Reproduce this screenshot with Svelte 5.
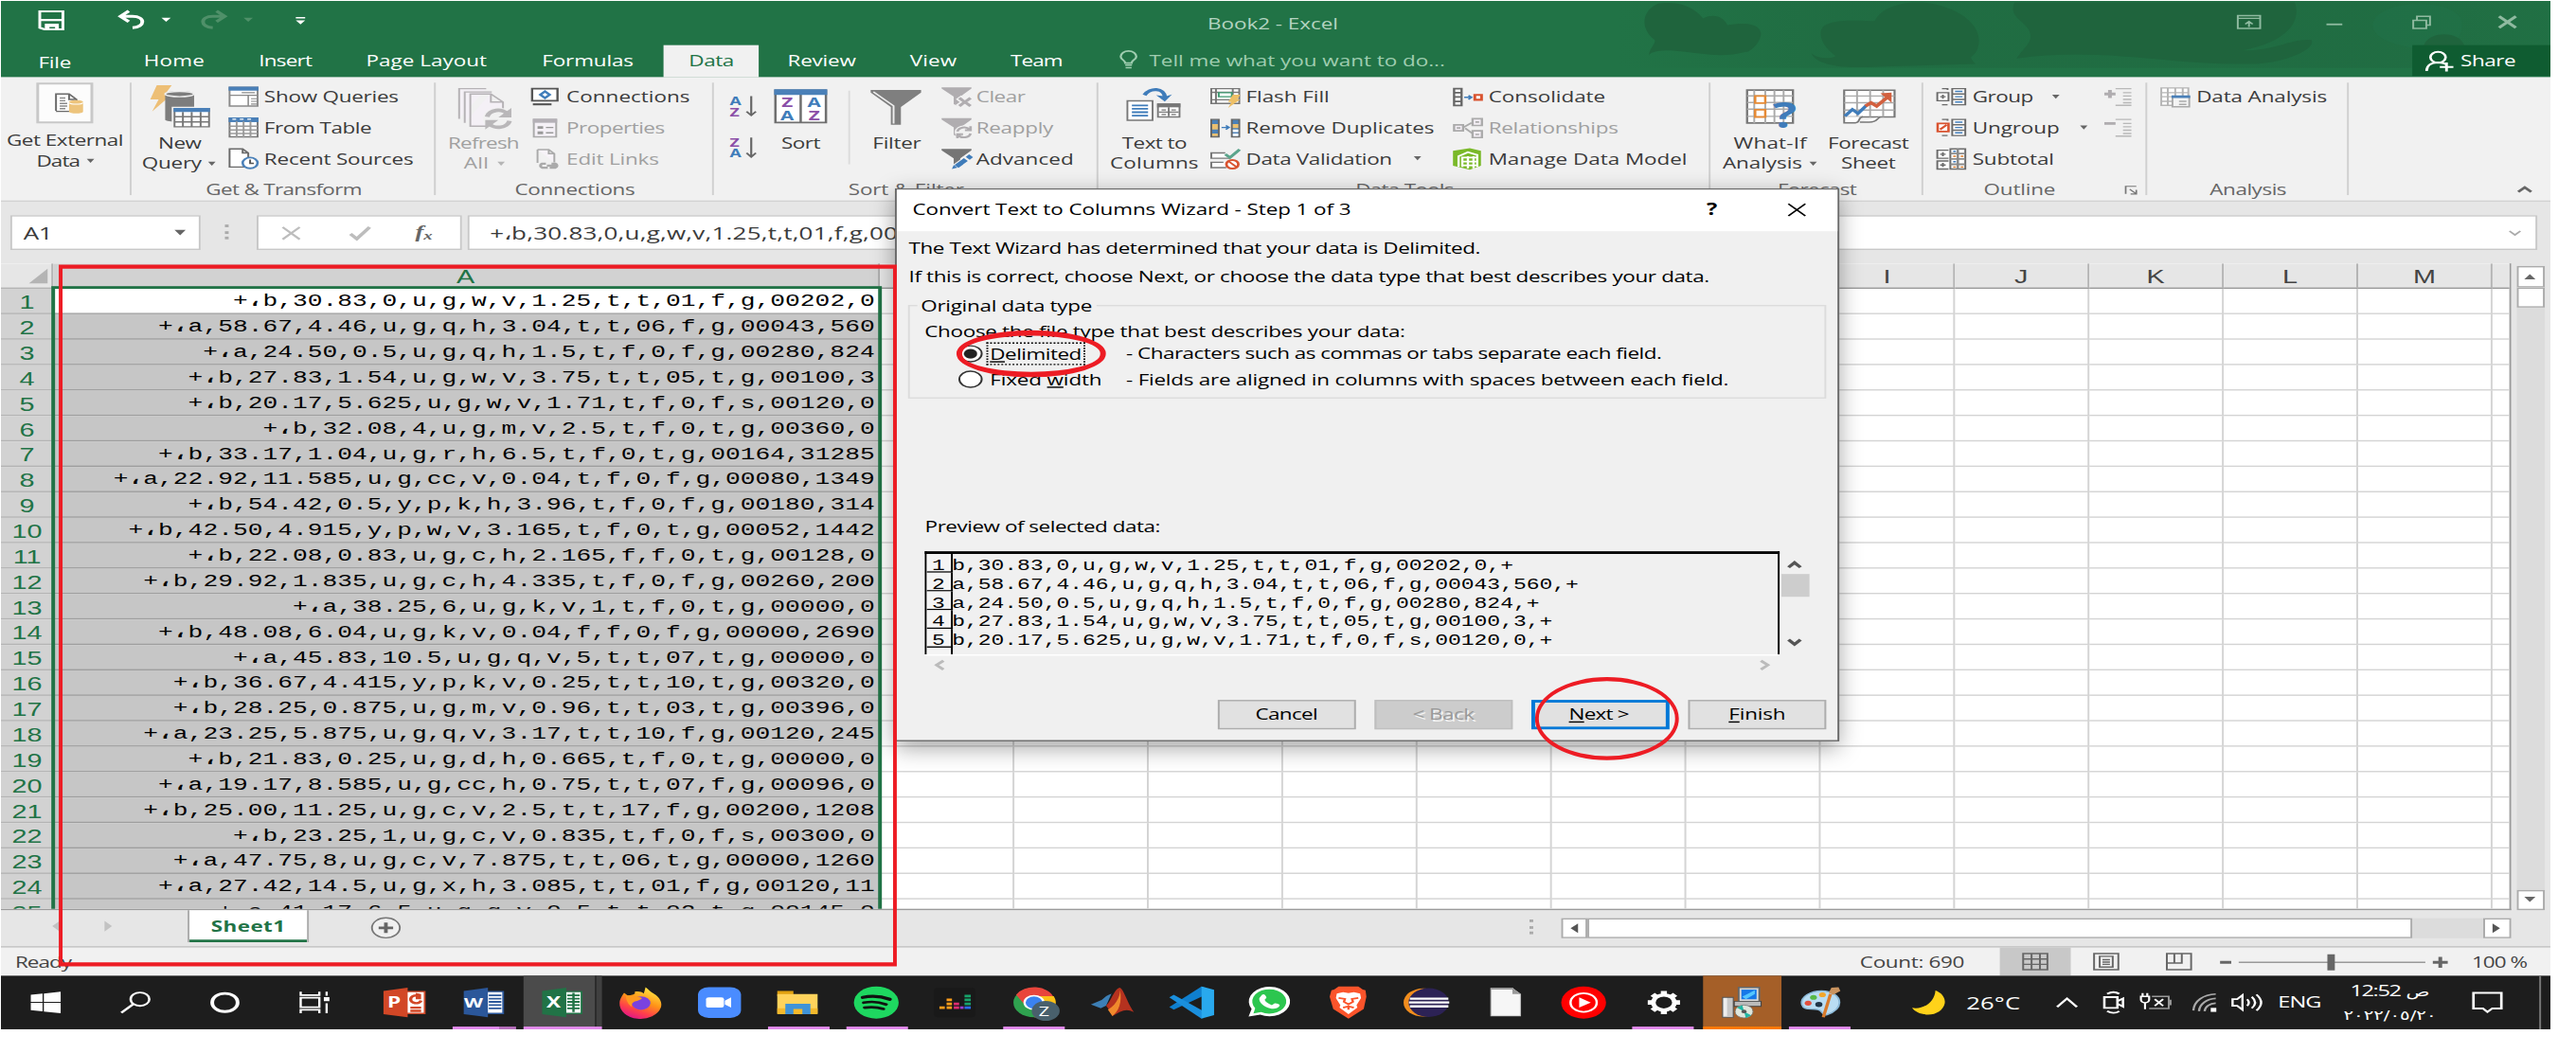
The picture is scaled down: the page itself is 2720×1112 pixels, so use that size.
<script>
  // The desktop is laid out at 1366x768 and stretched to fill the page.
  const SX = 1.9707;

  // Spreads letters so that a run of text takes exactly `w` layout pixels.
  function fit(node, w) {
    if (!w) return;
    const natural = node.getBoundingClientRect().width / SX;
    node.style.letterSpacing = (w - natural) / node.textContent.length + 'px';
  }

  const rows = [
    'b,30.83,0,u,g,w,v,1.25,t,t,01,f,g,00202,0',
    'a,58.67,4.46,u,g,q,h,3.04,t,t,06,f,g,00043,560',
    'a,24.50,0.5,u,g,q,h,1.5,t,f,0,f,g,00280,824',
    'b,27.83,1.54,u,g,w,v,3.75,t,t,05,t,g,00100,3',
    'b,20.17,5.625,u,g,w,v,1.71,t,f,0,f,s,00120,0',
    'b,32.08,4,u,g,m,v,2.5,t,f,0,t,g,00360,0',
    'b,33.17,1.04,u,g,r,h,6.5,t,f,0,t,g,00164,31285',
    'a,22.92,11.585,u,g,cc,v,0.04,t,f,0,f,g,00080,1349',
    'b,54.42,0.5,y,p,k,h,3.96,t,f,0,f,g,00180,314',
    'b,42.50,4.915,y,p,w,v,3.165,t,f,0,t,g,00052,1442',
    'b,22.08,0.83,u,g,c,h,2.165,f,f,0,t,g,00128,0',
    'b,29.92,1.835,u,g,c,h,4.335,t,f,0,f,g,00260,200',
    'a,38.25,6,u,g,k,v,1,t,f,0,t,g,00000,0',
    'b,48.08,6.04,u,g,k,v,0.04,f,f,0,f,g,00000,2690',
    'a,45.83,10.5,u,g,q,v,5,t,t,07,t,g,00000,0',
    'b,36.67,4.415,y,p,k,v,0.25,t,t,10,t,g,00320,0',
    'b,28.25,0.875,u,g,m,v,0.96,t,t,03,t,g,00396,0',
    'a,23.25,5.875,u,g,q,v,3.17,t,t,10,f,g,00120,245',
    'b,21.83,0.25,u,g,d,h,0.665,t,f,0,t,g,00000,0',
    'a,19.17,8.585,u,g,cc,h,0.75,t,t,07,f,g,00096,0',
    'b,25.00,11.25,u,g,c,v,2.5,t,t,17,f,g,00200,1208',
    'b,23.25,1,u,g,c,v,0.835,t,f,0,f,s,00300,0',
    'a,47.75,8,u,g,c,v,7.875,t,t,06,t,g,00000,1260',
    'a,27.42,14.5,u,g,x,h,3.085,t,t,01,f,g,00120,11',
    'a,41.17,6.5,u,g,q,v,0.5,t,t,02,t,g,00145,0'
  ];
  // Headers of the columns that lie behind the dialog stay blank.
  const cols = ['', '', '', '', '', '', '', 'I', 'J', 'K', 'L', 'M'];

  const funnel = (c) => `<path fill="${c}" d="M0 .5H16V1.5L10 7.5V15L6.5 13V7.5L0 1.5Z"/>`;
  const outline = `<path fill="none" stroke="#6a6a6a" d="M6 2.5V1.500H3M6 13.500H3"/><path fill="#fff" stroke="#6a6a6a" d="M8.500 1.500h7v12h-7zM8.500 5.500h7M8.500 9.500h7"/><path stroke="#3f7cba" d="M10 3.500h4M10 7.500h4M10 11.500h4"/>`;
  const pict = {
    showq: '<path fill="#fff" stroke="#8a8a8a" d="M.5 .5h15v14H.5z"/><path fill="#4a80b8" d="M0 0h16v3H0z"/><path stroke="#8a8a8a" d="M.5 6.500h15M10.500 6.500v8M7 4.500h7M12 9h3M12 11h3M12 13h3" stroke-width=".8"/>',
    table: '<path fill="#fff" stroke="#7a7a7a" d="M.5 .5h15v14H.5z"/><path fill="#4a80b8" d="M0 0h16v3.500H0z"/><path stroke="#9a9a9a" d="M.5 6.500h15M.5 9.300h15M.5 12h15M4.300 3v12M8 3v12M11.700 3v12"/><path stroke="#fff" stroke-width=".8" d="M2 1.300h2M6 1.300h2M10 1.300h2"/>',
    recent: '<path fill="#fff" stroke="#6a6a6a" d="M.5 .5h7l3 3v10.500H.5zM7.500.5v3h3"/><circle cx="11.500" cy="11" r="4" fill="#fff" stroke="#4a80b8" stroke-width="1.300"/><path fill="none" stroke="#555" d="M11.500 8.500V11.300H13.500"/>',
    conn: '<path fill="#fff" stroke="#555" stroke-width="1.200" d="M.6 1.500h13.600v9H.6z"/><path stroke="#555" stroke-width="1.500" d="M1 13.200h10"/><path fill="none" stroke="#3f7cba" stroke-width="1.500" d="M7.500 3.500l2.500 2.500-2.500 2.500L5 6z"/>',
    props: '<path fill="#f5f1f7" stroke="#aaa" d="M1.500 1.500h12v13h-12z"/><path fill="#b4b0b6" d="M1 1h13v3H1z"/><path fill="none" stroke="#999" d="M4 7h2v1H4zM4 11h2v1H4zM8 7.500h4M8 11.500h4"/>',
    links: '<path fill="#f7f3f8" stroke="#aaa" d="M3.500 1h6l3 3v6.500M3.500 1v10M9.500 1v3h3"/><path fill="none" stroke="#aaa" stroke-width="1.600" d="M8 11.500H6a1.700 1.700 0 000 3h3M8.500 13h5M11 11.500h2a1.700 1.700 0 010 3h-3"/>',
    clear: funnel('#b0adb0') + '<path stroke="#f1f1f1" stroke-width="4" d="M9 8l7 7M16 8l-7 7"/><path stroke="#b0adb0" stroke-width="1.800" d="M9.500 8.500l6 6M15.500 8.500l-6 6"/>',
    reapply: funnel('#b0adb0') + '<circle cx="12" cy="11" r="5" fill="#f1f1f1"/><path fill="none" stroke="#b0adb0" stroke-width="1.400" d="M8.500 10.500a3.600 3.600 0 016.500-1.500M15.500 12a3.600 3.600 0 01-6.500 1.300M15.500 6.500v3h-3M8.500 15.500v-3h3"/>',
    adv: funnel('#757575') + '<path stroke="#f1f1f1" stroke-width="5" d="M7 15l8-8"/><path stroke="#3f7cba" stroke-width="3" d="M8 13.500l5-5M14 7.500l1.800-1.800"/><path fill="#3f7cba" d="M5.500 15.500l1-3 2 2z"/>',
    flash: '<path fill="#fff" stroke="#777" d="M.5 1.500h15v11H.5zM.5 4.300h15M.5 9.800h15M3 1.500v11M12 1.500v11"/><path fill="#fff" stroke="#3d9970" d="M4.500 4.500h7v3h-7z"/><path fill="#edbf66" d="M12 6h4l-1.500 3.500H16L9.500 16l1.800-4.500H9.500z"/>',
    dups: '<path fill="#4a80b8" stroke="#666" d="M.5 1.500h4v13h-4zM11.500 1.500h4v13h-4z"/><path fill="#eabf70" d="M1 5h3v4H1zM1 12h3v2H1zM12 5h3v3h-3z"/><path fill="#fff" d="M12 9h3v2h-3zM12 12h3v2h-3z"/><path fill="none" stroke="#3f7cba" d="M6 7.500h4M8.300 6l1.700 1.500L8.300 9"/>',
    valid: '<path fill="#fff" stroke="#777" d="M8 3.500H.5v4h10M7 10.500H.5v4h8"/><path fill="none" stroke="#5ba58c" stroke-width="1.800" d="M8 4.500l2.500 2.500L15.700 1"/><circle cx="11.800" cy="12" r="3.200" fill="#fff" stroke="#d9532f" stroke-width="1.400"/><path stroke="#d9532f" stroke-width="1.200" d="M9.700 9.700l4.500 4.500"/>',
    cons: '<path fill="#fff" stroke="#666" stroke-width="1.200" d="M.6 1.500h4v12.500h-4zM.6 4.500h4M.6 7.700h4M.6 11h4"/><path fill="none" stroke="#3f7cba" d="M6 8h4M8.300 6.500L10 8 8.300 9.500"/><path fill="#fff" stroke="#d9532f" stroke-width="1.500" d="M11.700 6.200h3.600v3.600h-3.600z"/>',
    rel: '<path fill="#f4eff6" stroke="#aaa" stroke-width="1.200" d="M.6 5.500h4.800v4.500H.6zM10.500 1h5v5h-5zM10.500 10h5v5h-5z"/><path fill="none" stroke="#aaa" stroke-width="1.200" d="M5.500 7.500L10 4M6.500 8l4 4M2 7.800h2M12 3.500h2M12 12.700h2"/>',
    model: '<path fill="#7ab929" d="M0 2L9 0l6 2v11l-6 3-9-3z"/><path fill="none" stroke="#fff" stroke-width="1.200" d="M3 14V6l5-3 5 2v9M5 14V7h8M5 10h8M8 6v9M11 6v9M5 12.800h8"/>',
    group: outline + '<path fill="#fff" stroke="#6a6a6a" d="M.5 4.500h6v6h-6zM2 7.500h3M3.500 6v3"/>',
    ungroup: outline + '<path fill="#fff" stroke="#d9532f" stroke-width="1.300" d="M.7 4.500h5.800v6H.7zM2 9l3.500-3.500"/>',
    sub: '<path fill="#fff" stroke="#6a6a6a" d="M6.500 1.500h-6v6h6M6.500 9.500h-6v6h6M2 4.500h3M3.500 3v3M2 12.500h3M3.500 11v3M7.500.5h8v15h-8z"/><path stroke="#8a8a8a" stroke-width="1.300" d="M7.500 4h8M7.500 8h8M7.500 12h8M11.500.5v15"/><path stroke="#e07b28" d="M9 6h1.500M13 6h1.500M9 14h1.500M13 14h1.500"/><path stroke="#3f7cba" d="M9 2.300h1.500M9 10h1.500"/>',
    plus: '<path stroke="#b0adb0" stroke-width="2" d="M0 5.500h6M3 2.500v6"/><path stroke="#b8b8b8" d="M6 1.500h8.500M10 4.500h4.500M10 7h4.500M10 9.500h4.500M10 12h4.500M6 14h8.500"/>',
    minus: '<path stroke="#b0adb0" stroke-width="2" d="M0 4.500h6"/><path stroke="#b8b8b8" d="M6 1.500h8.500M10 4.500h4.500M10 7h4.500M10 9.500h4.500M10 12h4.500M6 14h8.500"/>',
    analysis: '<path fill="#fff" stroke="#b5b5b5" d="M.5 1h14.500v13H.5zM.5 4.500h14.500M.5 7.500h8M.5 11h8M4 1v13M8 1v13M12 1v6"/><path fill="#f4f4f4" stroke="#aaa" d="M6.500 7.500h9v7.500h-9z"/><path fill="#4a80b8" d="M6 6.500h10v2H6z"/><path stroke="#aaa" d="M10 11h4M10 13.300h4"/>'
  };
  const big = {
    external: '<path fill="#fcfcfc" stroke="#c8c8c8" stroke-width="1.500" d="M.7.7h29v29h-29z"/><path fill="#fff" stroke="#6a6a6a" d="M10.500 21V8.500h7l4 4v2M17.500 8.500v4h4M10.500 21.500h7"/><path stroke="#8a8a8a" d="M12.500 11.500h3M12.500 13.500h3M12.500 15.500h4M12.500 17.500h4M12.500 19.500h3"/><path fill="#edc47c" d="M17.500 14.500c0-2 7.500-2 7.500 0v7c0 2-7.500 2-7.500 0z"/><path fill="none" stroke="#fff" stroke-width=".8" d="M17.500 15c1 1.500 6.500 1.500 7.500 0"/>',
    query: '<path fill="#edbf76" d="M3.500 0h8L7.500 7.500H11L1 19.500l3.500-9H0z"/><path fill="#7d7d7d" d="M8 6.500c0-3 15.500-3 15.500 0V26c-2 2-13 2-15.500 0z"/><ellipse cx="15.700" cy="6.500" rx="7.700" ry="2" fill="#7d7d7d" stroke="#eee"/><path fill="#fff" stroke="#f1f1f1" stroke-width="3" d="M13 17.500h18.500V31H13z"/><path fill="#fff" stroke="#777" d="M13 17.500h18.500V31H13zM13 23.500h18.500M13 27.300h18.500M17.500 20v11M22.200 20v11M27 20v11"/><path fill="#4a80b8" d="M12.500 17h19.500v3H12.500z"/>',
    refresh: '<path fill="#f4f0f6" stroke="#b5b2b5" d="M15 .5H.5V23M18 3H3.500v23M6.500 28.500V4.500h11l6.500 6v18zM17.500 4.500v6h6.500"/><circle cx="21.500" cy="23" r="8.300" fill="#f1f1f1"/><path fill="none" stroke="#b9b7b9" stroke-width="2.600" d="M15.500 21.500a6 6 0 0111-2M27.500 24.500a6 6 0 01-11 2"/><path fill="#b9b7b9" d="M28.500 15v7h-7zM14.500 31v-7h7z"/>',
    sort: '<path fill="#fff" stroke="#6f6f6f" stroke-width="1.300" d="M.7.7h27.600v24.600H.7zM14.500 4v21"/><path fill="#4a80b8" d="M0 0h29v4.300H0z"/>',
    filter: '<path fill="#7f7f7f" d="M0 .5h27.500V2.500L16.500 13.500V27H11V13.500L0 2.500z"/><path fill="none" stroke="#eee" stroke-width="1" d="M1.500 2l11 10.500V26"/>',
    t2c: '<path fill="#fff" stroke="#777" d="M.5 10h14v15H.5zM17.500 12.500h12v10h-12z"/><path stroke="#3f7cba" stroke-width="1.300" d="M3 13.500h9M3 16.200h9M3 18.800h9M3 21.500h9"/><path fill="#777" d="M17 12h13v3H17z"/><path stroke="#777" d="M18 18.700h11M23.500 15v7M19.500 17h2.500M25 17h2.500M19.500 20.500h2.500M25 20.500h2.500"/><path fill="none" stroke="#3f7cba" stroke-width="2.400" d="M10 5.500C13-.5 21-.5 21.500 7.500"/><path fill="#3f7cba" d="M16.500 5.500l4.800 5 4-5.500-3.500 1.500z"/>',
    whatif: '<path fill="#fff" stroke="#777" stroke-width="1.200" d="M.6.6h25v25H.6z"/><path stroke="#aaa" d="M.6 5h25M.6 10h25M.6 15h25M.6 20.500h25M4.500.6v25M10.500.6v25M15.500.6v25M20.500.6v25"/><path fill="#fff" stroke="#e58a35" stroke-width="1.300" d="M5 5h5.500v5.500H5zM5 15.500h5.500V21H5z"/>',
    forecast: '<path fill="#fff" stroke="#777" stroke-width="1.100" d="M.6.6h27v20h-27z"/><path stroke="#aaa" d="M.6 5h27M.6 10h27M.6 15.500h27M7.500.6v20M14.500.6v20M21.500.6v20"/><path fill="#fff" stroke="#777" d="M.6 20.500v4.500h6c3 0 1-4 4-4.500M9 24.500h5c4.500 0 4-3 6-4"/><path fill="none" stroke="#3f7cba" stroke-width="2" d="M1 20l4-5 3 3 4.500-6"/><path fill="none" stroke="#d2603f" stroke-width="2.200" d="M12 12.500l3-2.500 3 2.500 7-8"/><path fill="#d2603f" d="M20 3l6-.5V10z"/>'
  };
  const apps = [
    ['ppt', '<path fill="#fff" stroke="#d24726" d="M12 4h12v17H12z"/><path fill="#d24726" d="M1 3.500L14.500 1v23L1 21.500z"/><path fill="none" stroke="#d24726" stroke-width="1.800" d="M16 16.500h6M16 19h6M19 7a3 3 0 103 4"/><path fill="#d24726" d="M19 5l3 1v4h-3z"/>', 'P'],
    ['word two', '<path fill="#fff" stroke="#2b579a" d="M12 4h11v17H12z"/><path stroke="#2b579a" d="M15 7h7M15 9.500h7M15 12h7M15 14.500h7M15 17h7" stroke-width="1.300"/><path fill="#2b579a" d="M1 3.500L14.500 1v23L1 21.500z"/>', 'W'],
    ['excel active', '<path fill="#fff" stroke="#217346" d="M12 4h11v17H12z"/><path stroke="#217346" stroke-width="1.300" d="M15 7h7M15 9.500h7M15 12h7M15 14.500h7M15 17h7M18.500 5v15"/><path fill="#217346" d="M1 3.500L14.500 1v23L1 21.500z"/>', 'X'],
    ['firefox', '<defs><linearGradient id="ff" x1=".8" y1="0" x2=".3" y2="1"><stop offset="0" stop-color="#fff14a"/><stop offset=".45" stop-color="#ff9416"/><stop offset=".75" stop-color="#ff3f4b"/><stop offset="1" stop-color="#e0158a"/></linearGradient></defs><path fill="url(#ff)" d="M15 .5c2 2 2.500 3.500 4.500 5 3.500 3 5 7 4 11A11.700 11.700 0 01.5 13C.5 10 2 7 3 5l2 2c1 0 3-.5 4-1.500L9 4c2-.5 4 0 5 1.500z"/><circle cx="12.500" cy="13" r="5.200" fill="#7a42e0"/><path fill="#ff9a1f" d="M4 7c3 0 5 0 9 2-1 2-3 2-4.500 3-2 2-1 3-1 4C5 14 4 10 4 7z"/>'],
    ['camera', '<rect x=".5" y=".5" width="24" height="24" rx="6" fill="#4a8cff"/><rect x="5" y="8.500" width="10" height="8" rx="1.500" fill="#fff"/><path fill="#fff" d="M15.500 11l3.500-2.500v8L15.500 14z"/>'],
    ['folder open', '<path fill="#e0a110" d="M1 3.500h9v4H1z"/><path fill="#ffd35c" d="M1 6h22.500v15H1z"/><path fill="#f4b92c" d="M1 17h22.500v4.500H1z"/><path fill="#3f93d8" d="M5.500 13.500h14V21.500h-4.500v-4h-5v4H5.500z"/>'],
    ['spotify open', '<circle cx="12.500" cy="12.500" r="12.500" fill="#1ed760"/><path fill="none" stroke="#111" stroke-width="2.400" stroke-linecap="round" d="M5 8.500c5-1.500 10-1 15 1.500"/><path fill="none" stroke="#111" stroke-width="2" stroke-linecap="round" d="M5.500 12.600c4-1 8.500-.7 12.500 1.400M6 16.500c4-.8 7-.5 10.500 1"/>'],
    ['deezer', '<rect x="1" y="1" width="23" height="23" rx="2" fill="#191919"/><path fill="#ff9d1b" d="M4 15.500h3v2H4zM8 15.500h3v2H8zM8 12.500h3v2H8zM8 9.500h3v2H8z"/><path fill="#e02c72" d="M12 15.500h3v2h-3zM12 12.500h3v2h-3z"/><path fill="#9b3cd0" d="M15.500 15.500h2v2h-2z"/><path fill="#2c6bf0" d="M18 15.500h3.500v2H18z"/><path fill="#17a36b" d="M18 6.500h3.500v2H18zM18 9.500h3.500v2H18zM18 12.500h3.500v2H18z"/>'],
    ['chrome open', '<circle cx="12" cy="12.500" r="11.500" fill="#2fa24f"/><path fill="#e8453c" d="M2 6.500A11.500 11.500 0 0123 8.500H12l-5 6z"/><path fill="#fbc116" d="M12 7.500h11a11.500 11.500 0 01-11 16.500L17 14z"/><circle cx="12" cy="12.500" r="5.300" fill="#3b82f0" stroke="#fff" stroke-width="1.200"/><circle cx="18.500" cy="19" r="7.800" fill="#49606c"/>', 'Z'],
    ['matlab', '<path fill="#3d7fb5" d="M0 14l6-3.500 2.500-3c1.500-1 2.500-1.500 3-2L8.500 15l-3 2z"/><path fill="#b5321f" d="M8.500 15C11.500 11 13 2 16 1c2 0 4 11 8 19-3-2-5-2-8 0l-4 3c-1-3-2-5-3.500-8z"/><path fill="#f08a2c" d="M16 1c1 4-1 13-6.500 17l2.500 5c3-3 6-10 4-22z"/>'],
    ['code', '<path fill="#0f7fce" d="M18 0L0 16l2.500 2L24 4z"/><path fill="#1a8fdd" d="M0 8.500l2.500-2L20 20l-2 5z"/><path fill="#29a9ee" d="M18 0l7 2.700v19.600L18 25z"/>'],
    ['whatsapp', '<path fill="#fff" d="M.5 23.500L2.200 17.500A11.500 11.500 0 117 22z"/><path fill="#2cc64f" d="M3.200 21l1-4A9.500 9.500 0 117.500 20z"/><path fill="#fff" d="M8 6.500c1-1 2 0 2.500 2 0 1-1 1.300-1 2 .7 1.800 2 3 4 4 1-.3 1-1.400 2-1.300 2 .6 2.700 1.200 2.300 2-.8 2-3 2.500-5 2C9 16 6 12 6.500 9z"/>'],
    ['brave', '<path fill="#fb542b" d="M7 0h11l2.500 2.500 1.500.5.500 5-1.500 9.500-8.500 7.500-8.500-7.500L2 8l1-5 1.500-.5z"/><path fill="#fff" d="M6 5.500l3.500-1 3 .7 3-.7 3.500 1 .5 3.500-2.500 5.500.5 2-5 5-5-5 .5-2L5.500 9z"/><path fill="none" stroke="#fb542b" stroke-width="1.300" d="M7 9l3.500.7-.5 2.300 2.500 2 2.500-2-.5-2.300 3.500-.7M9.500 16.500l3-1 3 1M12.500 15v3"/>'],
    ['eclipse', '<circle cx="10.500" cy="12.500" r="11" fill="#f18d1d"/><circle cx="13.500" cy="12.500" r="11.200" fill="#2c2255"/><path stroke="#fff" stroke-width="1.700" d="M3 9.500h21.500M2.500 12.500H25M3 15.500h21.500"/>'],
    ['blank', '<path fill="#f6f6f6" stroke="#bbb" stroke-width=".6" d="M4.500 1.500h12l4.500 4.500v17H4.500z"/><path fill="#999" d="M4.500 1H17v1.500H4.500zM16.500 1.500L21 6h-4.500z"/>'],
    ['ytm', '<circle cx="12.500" cy="12.500" r="12.500" fill="#f00"/><circle cx="12.500" cy="12.500" r="7.300" fill="none" stroke="#fff" stroke-width="1.300"/><path fill="#fff" d="M10 8.500l6.500 4-6.500 4z"/>'],
    ['cog open', '<circle cx="12.500" cy="12.500" r="5.900" fill="none" stroke="#fff" stroke-width="2.600"/><path stroke="#fff" stroke-width="3.400" d="M12.500 3.500v3.500M12.500 18v3.500M3.500 12.500H7M18 12.500h3.500M6.200 6.200l2.300 2.300M18.800 6.200l-2.300 2.300M6.200 18.800l2.300-2.300M18.800 18.800l-2.300-2.300"/>'],
    ['setup', '<path fill="#c8c8c8" stroke="#555" stroke-width=".6" d="M1.500 8.500h6V24h-6z"/><path fill="#eee" d="M2 9h2v14H2z"/><path fill="#d8d8d8" stroke="#666" d="M10.500.8H22V12H10.500z"/><path fill="#1678e8" d="M12 2.500h8.500v7.500H12z"/><path fill="#54c6ff" d="M12.500 8l7-5v3l-5 4z"/><path fill="#bbb" stroke="#444" stroke-width=".6" d="M8 11.500h15v4H8z"/><circle cx="13.500" cy="19.500" r="5" fill="#dfe6dc" stroke="#777" stroke-width=".5"/><path fill="#21b6a3" d="M13.500 19.500l-4-3 3-2zM13.500 19.500l4 3-3 2z"/><circle cx="13.500" cy="19.500" r="1.400" fill="#555"/>'],
    ['paint open', '<path fill="#b9ddf3" stroke="#8bb9d8" d="M2 14C1 8 7 3.500 13 3.500s10 4 10 9-4 8-7 9.500c-3 1-2-3-5-4-4-1-8 1-9-4z"/><circle cx="5.500" cy="13" r="1.900" fill="#e2503e"/><circle cx="8.500" cy="8.500" r="1.900" fill="#57b947"/><circle cx="13.500" cy="6.500" r="1.900" fill="#f1a62c"/><circle cx="11.500" cy="14" r="2" fill="#1f3549"/><path stroke="#d97b2c" stroke-width="1.800" d="M18 6l-4 18"/><path fill="#c9935f" d="M17 5l1.500-4 4-.5 1 3-4 3z"/>']
  ];
</script>

{#snippet t(text, w, cls = '')}<span class="t {cls}" use:fit={w}>{text}</span>{/snippet}
{#snippet caret(cls = '')}<i class="caret {cls}"></i>{/snippet}
{#snippet cmd(icon, text, w, cls = '')}
  <div class="cmd {cls}"><svg class="sm" viewBox="0 0 16 16">{@html pict[icon]}</svg>{@render t(text, w)}{#if cls.includes('menu')}{@render caret()}{/if}</div>
{/snippet}
{#snippet label(text, w)}<div class="glabel">{@render t(text, w)}</div>{/snippet}

<div class="page">
  <div class="screen">
    <header class="titlebar">
      <svg class="art" viewBox="0 0 500 57">
        <defs><linearGradient id="haze" x1="0" x2="1"><stop offset="0" stop-color="#1f653e" stop-opacity="0"/><stop offset=".25" stop-color="#1f653e" stop-opacity=".45"/><stop offset=".8" stop-color="#1f653e" stop-opacity=".45"/><stop offset="1" stop-color="#1f653e" stop-opacity=".25"/></linearGradient></defs>
        <path fill="url(#haze)" d="M0 0h500v50H0z"/>
        <path fill="#1f643d" d="M22 2c10-2 19 2 24 11 6-4 11-1 13 5 8-2 17-2 18 6 0 8-7 15-8 14-16 6-29-1-43-1-5 0-9 2-9 4 0-6 4-9 3-12C13 22 12 8 22 2z"/>
        <path fill="#1f643d" d="M109 24c0-12 20-9 29-9 4-12 20-17 34-12 14 5 25 18 21 33-2 7-6 4-1 11l-50 2c-12 1-34 2-38-10 4 5 12 4 13 2-5-5-8-11-8-17z"/>
        <path fill="#1f643d" d="M213 1h150c4 15-5 30-28 36 19 0 25-9 37-8 3 8-18 19-35 18-40 1-79-13-123-4 4-9 9-12 7-20-2-8-12-11-8-22z"/>
        <path fill="#22724a" opacity=".6" d="M405 16c4-17 40-19 47-3 3 13-5 23-14 24-20-2-35-9-33-21z"/>
        <path fill="#1f643d" d="M432 34c2-12 20-12 22 0z"/>
      </svg>
      <div class="quick">
        <svg viewBox="0 0 150 16">
          <path fill="none" stroke="#fff" stroke-width="1.500" d="M.8.8h12.400v13.400H3.300L.8 13z"/><path fill="#fff" d="M.8 6.500h12.400V8H.8zM3.500 10h7.500v5H9v-2.500H6V15H3.500z"/>
          <path fill="none" stroke="#fff" stroke-width="2" d="M44 4.500h6.500c7 0 7 8 0 8.500M48.500.5L44 4.500l4.500 4"/>
          <path fill="#fff" d="M66 5.500h5L68.500 8.500z"/>
          <path fill="none" stroke="#4f9069" stroke-width="2" d="M100 4.500h-6.500c-7 0-7 8 0 8.500M95.500.5L100 4.500l-4.500 4"/>
          <path fill="#4f9069" d="M110 5.500h5L112.500 8.500z"/>
          <path fill="#fff" d="M138 5h5v1h-5zM138 7.500h5L140.500 10.500z"/>
        </svg>
      </div>
      <div class="docname">{@render t('Book2 - Excel', 70)}</div>
      <div class="winctl">
        <svg viewBox="0 0 152 12">
          <g fill="none" stroke="#8fbaa0"><path d="M.5 1h12v9.500H.5zM.5 3h12M6.500 9.500V5.500M4.500 7.300l2-2 2 2"/><path stroke-width="1.300" d="M48 7.500h8.500"/><path d="M94.500 4.500h7v6h-7zM96.500 4.500v-3h7v6.500h-2"/><path stroke-width="1.800" d="M140.500 1.500l9 8.500M149.500 1.500l-9 8.500"/></g>
        </svg>
      </div>
      <nav>
        <span class="tab file">{@render t('File', 17.700)}</span>
        <span class="tab home">{@render t('Home', 32.600)}</span>
        <span class="tab insert">{@render t('Insert', 28.500)}</span>
        <span class="tab layout">{@render t('Page Layout', 64.800)}</span>
        <span class="tab formulas">{@render t('Formulas', 49)}</span>
        <span class="tab data">{@render t('Data', 24)}</span>
        <span class="tab review">{@render t('Review', 36.500)}</span>
        <span class="tab view">{@render t('View', 25.200)}</span>
        <span class="tab team">{@render t('Team', 27.600)}</span>
        <span class="tab tell"><svg viewBox="0 0 11 14"><path fill="none" stroke="#9fcdb0" stroke-width="1.200" d="M3.500 9.500C3.500 7 1 7 1 4.500a4.300 4.300 0 018.600 0C9.600 7 7 7 7 9.500zM3.500 11h3.700M3.700 13h3.300"/></svg>{@render t('Tell me what you want to do...', 158.500)}</span>
        <span class="share"><svg viewBox="0 0 16 16"><path fill="none" stroke="#fff" stroke-width="1.400" d="M.7 15.500c0-5 3-6.500 6.300-6.500s4 1 4.500 1.500"/><circle cx="7" cy="5" r="4.200" fill="none" stroke="#fff" stroke-width="1.400"/><path stroke="#fff" stroke-width="1.500" d="M8 12.500h7.500M11.700 9v7"/></svg>{@render t('Share', 29.500)}</span>
      </nav>
    </header>

    <section class="ribbon">
      <div class="group g1">
        <div class="big"><svg viewBox="0 0 31 31" class="b1">{@html big.external}</svg>{@render t('Get External', 62.500)}<span>{@render t('Data', 23.200)}{@render caret()}</span></div>
      </div>
      <div class="group g2">
        <div class="body">
          <div class="big"><svg viewBox="0 0 32 32" class="b2">{@html big.query}</svg>{@render t('New', 23)}<span class="wm">{@render t('Query', 32)}{@render caret()}</span></div>
          <div class="list">{@render cmd('showq', 'Show Queries', 72)}{@render cmd('table', 'From Table', 57.500)}{@render cmd('recent', 'Recent Sources', 80)}</div>
        </div>
        {@render label('Get & Transform', 83.500)}
      </div>
      <div class="group g3">
        <div class="body">
          <div class="big off"><svg viewBox="0 0 31 32" class="b3">{@html big.refresh}</svg>{@render t('Refresh', 38)}<span>{@render t('All', 13.500)}{@render caret()}</span></div>
          <div class="list">{@render cmd('conn', 'Connections', 66.200)}{@render cmd('props', 'Properties', 52.500, 'off')}{@render cmd('links', 'Edit Links', 49.500, 'off')}</div>
        </div>
        {@render label('Connections', 64.500)}
      </div>
      <div class="group g4">
        <div class="body">
          <div class="az">
            <div class="pair"><b><i class="blue">A</i><i class="purple">Z</i></b><svg viewBox="0 0 6 16"><path fill="none" stroke="#666" stroke-width="1.100" d="M3 0v14M.5 11.500L3 14.500l2.500-3"/></svg></div>
            <div class="pair"><b><i class="purple">Z</i><i class="blue">A</i></b><svg viewBox="0 0 6 16"><path fill="none" stroke="#666" stroke-width="1.100" d="M3 0v14M.5 11.500L3 14.500l2.500-3"/></svg></div>
          </div>
          <div class="big sortbtn"><span class="sorticon"><svg viewBox="0 0 29 26" class="b4">{@html big.sort}</svg><b class="zaaz"><i class="purple">Z</i><i class="blue">A</i><i class="blue">A</i><i class="purple">Z</i></b></span>{@render t('Sort', 20.700)}</div>
          <div class="rule"></div>
          <div class="big filterbtn"><svg viewBox="0 0 28 28" class="b5">{@html big.filter}</svg>{@render t('Filter', 26)}</div>
          <div class="list">{@render cmd('clear', 'Clear', 26.300, 'off')}{@render cmd('reapply', 'Reapply', 41.300, 'off')}{@render cmd('adv', 'Advanced', 52.300)}</div>
        </div>
        {@render label('Sort & Filter', 62)}
      </div>
      <div class="group g5">
        <div class="body">
          <div class="big"><svg viewBox="0 0 31 27" class="b6">{@html big.t2c}</svg>{@render t('Text to', 34.600)}{@render t('Columns', 47.600)}</div>
          <div class="list l1">{@render cmd('flash', 'Flash Fill', 44.800)}{@render cmd('dups', 'Remove Duplicates', 101)}{@render cmd('valid', 'Data Validation', 78.300, 'menu')}</div>
          <div class="list">{@render cmd('cons', 'Consolidate', 62.700)}{@render cmd('rel', 'Relationships', 69.500, 'off')}{@render cmd('model', 'Manage Data Model', 106.500)}</div>
        </div>
        {@render label('Data Tools', 52.600)}
      </div>
      <div class="group g6">
        <div class="body">
          <div class="big wi"><span class="wf"><svg viewBox="0 0 29 30" class="b7">{@html big.whatif}</svg><b>?</b></span>{@render t('What-If', 39.200)}<span>{@render t('Analysis', 42.600)}{@render caret()}</span></div>
          <div class="big fc"><svg viewBox="0 0 28 26" class="b8">{@html big.forecast}</svg>{@render t('Forecast', 43.300)}{@render t('Sheet', 29)}</div>
        </div>
        {@render label('Forecast', 42.200)}
      </div>
      <div class="group g7">
        <div class="body">
          <div class="list l1">{@render cmd('group', 'Group', 32.500, 'menu')}{@render cmd('ungroup', 'Ungroup', 46.700, 'menu')}{@render cmd('sub', 'Subtotal', 43.700)}</div>
          <div class="list">{@render cmd('plus', '', 0)}{@render cmd('minus', '', 0)}</div>
        </div>
        <div class="glabel out">{@render t('Outline', 38.500)}<svg viewBox="0 0 8 8"><path fill="none" stroke="#777" d="M.5 7V.5H7M3 3l3.500 3.500M7 3.500V7H3.500"/></svg></div>
      </div>
      <div class="group g8">
        <div class="body"><div class="list">{@render cmd('analysis', 'Data Analysis', 70)}</div></div>
        {@render label('Analysis', 41)}
      </div>
      <svg class="collapse" viewBox="0 0 9 6"><path fill="none" stroke="#666" stroke-width="1.800" d="M.7 5L4.500 1.300 8.300 5"/></svg>
    </section>

    <section class="fbar">
      <div class="box name">{@render t('A1', 15.500)}{@render caret('lg')}</div>
      <div class="dots"><i></i><i></i><i></i></div>
      <div class="box tools">
        <svg viewBox="0 0 12 12"><path stroke="#bdbdbd" stroke-width="1.500" d="M1 1l10 10M11 1L1 11"/></svg>
        <svg viewBox="0 0 13 12"><path fill="none" stroke="#bdbdbd" stroke-width="2.300" d="M.8 6.500l3.700 4L12 1"/></svg>
        <em>f<sub>x</sub></em>
      </div>
      <div class="box formula">{@render t('+،b,30.83,0,u,g,w,v,1.25,t,t,01,f,g,00202,0', 253)}<svg viewBox="0 0 9 6"><path fill="none" stroke="#aaa" stroke-width="1.300" d="M1 1l3.500 3.500L8 1"/></svg></div>
    </section>

    <section class="work">
      <div class="sheet">
        <div class="row head">
          <div class="num"><svg viewBox="0 0 10 11"><path fill="#b4b4b4" d="M10 0v11H0z"/></svg></div>
          <div class="a">A</div>
          {#each cols as c}<div class="c">{c}</div>{/each}
          <div class="c tail"></div>
        </div>
        {#each rows as r, i}
          <div class="row" class:first={i === 0}>
            <div class="num">{i + 1}</div>
            <div class="a"><span>+<u>،</u>{r}</span></div>
            {#each cols as c}<div class="c"></div>{/each}
            <div class="c tail"></div>
          </div>
        {/each}
        <div class="selection"></div>
      </div>
      <div class="vscroll"><div class="btn">{@render caret('up')}</div><div class="thumb"></div><div class="btn end">{@render caret('lg')}</div></div>
    </section>

    <section class="tabs">
      <svg class="navs" viewBox="0 0 32 8"><path fill="#c2c2c2" d="M4.500 0v8L.5 4zM28.500 0v8l4-4z"/></svg>
      <div class="sheettab">{@render t('Sheet1', 40)}</div>
      <svg class="add" viewBox="0 0 17 17"><circle cx="8.500" cy="8.500" r="7.700" fill="#f0f0f0" stroke="#777"/><path stroke="#666" stroke-width="2" d="M4.500 8.500h8M8.500 4.500v8"/></svg>
      <div class="dots"><i></i><i></i><i></i></div>
      <div class="hscroll"><div class="btn"><svg viewBox="0 0 4 7"><path fill="#555" d="M4 0v7L0 3.500z"/></svg></div><div class="thumb"></div><div class="btn end"><svg viewBox="0 0 4 7"><path fill="#555" d="M0 0v7l4-3.500z"/></svg></div></div>
    </section>

    <footer class="status">
      <div class="ready">{@render t('Ready', 30)}</div>
      <div class="count">{@render t('Count: 690', 56)}</div>
      <div class="v on"><svg viewBox="0 0 14 13"><path fill="none" stroke="#666" d="M.5.500h13v12H.5zM.5 4.500h13M.5 8.500h13M5 .5v12M9.500.5v12"/></svg></div>
      <div class="v"><svg viewBox="0 0 14 13"><path fill="none" stroke="#666" d="M.5.500h13v12H.5zM3.500 2.500h7v8h-7zM5 5h4M5 6.800h4M5 8.500h4"/></svg></div>
      <div class="v"><svg viewBox="0 0 14 13"><path fill="none" stroke="#666" d="M.5.500h13v12H.5zM.5 7.500h8v-7M4.500.5v7"/></svg></div>
      <svg class="slider" viewBox="0 0 122 12"><path stroke="#999" d="M10 6h100"/><path stroke="#666" stroke-width="2" d="M0 6h6M114 6h8M118 2v8"/><path fill="#666" d="M57.500 0h4v12h-4z"/></svg>
      {@render t('100 %', 29.500)}
    </footer>

    <section class="taskbar">
      <div class="sys"><svg viewBox="0 0 16 16"><path fill="#fff" d="M0 2.300L6.300 1.400V7.500H0zM7 1.300L16 0v7.500H7zM0 8.300h6.300v6.300L0 13.700zM7 8.300h9V16l-9-1.300z"/></svg></div>
      <div class="sys"><svg viewBox="0 0 16 16"><circle cx="10.500" cy="5.500" r="5" fill="none" stroke="#fff" stroke-width="1.300"/><path stroke="#fff" stroke-width="1.500" d="M7 9.200L.5 15.700"/></svg></div>
      <div class="sys"><svg viewBox="0 0 16 16"><circle cx="8" cy="8" r="6.800" fill="none" stroke="#fff" stroke-width="2"/></svg></div>
      <div class="sys tv"><svg viewBox="0 0 16 16"><path fill="none" stroke="#fff" stroke-width="1.200" d="M.6 0v2.500h10V0M.6 16v-2.500h10V16M.6 4.500h10v7H.6zM14.500 0v3M14.500 8.500V16"/><path fill="#fff" d="M13 4h3v3h-3z"/></svg></div>
      <div class="apps">
        {#each apps as [cls, svg, letter]}
          <div class="app {cls}"><div class="glyph"><svg viewBox="0 0 25 25">{@html svg}</svg>{#if letter}<b>{letter}</b>{/if}</div></div>
        {/each}
      </div>
      <svg class="moon" viewBox="0 0 18 18"><path fill="#ffd21a" d="M12.500 0c3 1.500 5.500 5 5 9.500-.7 5-4.500 8.500-9 8.500C4.500 18 1.500 16 0 13c5.500 1.500 12-3.500 12.500-13z"/></svg>
      <span class="temp">{@render t('26°C', 29)}</span>
      <svg class="chev" viewBox="0 0 12 8"><path fill="none" stroke="#fff" stroke-width="1.400" d="M.7 7.300L6 1l5.300 6.300"/></svg>
      <svg class="meet" viewBox="0 0 12 18"><path fill="none" stroke="#fff" stroke-width="1.300" d="M1 5h7v8H1zM8 8l3-2v6l-3-2M2.500 2.500Q6 0 9 2.500M2.500 15.500Q6 18 9 15.500"/></svg>
      <svg class="batt" viewBox="0 0 17 14"><path fill="none" stroke="#999" d="M6.500 2.500h9v9H5M16.500 5v4"/><path fill="none" stroke="#fff" stroke-width="1.100" d="M1.500 0v2.500M4 0v2.500M.6 2.500h4.400v2.500a2.200 2.200 0 01-4.400 0zM2.800 7.500V12M8 4.500l4.500 5M12.500 4.500L8 9.500"/></svg>
      <svg class="wifi" viewBox="0 0 13 14"><path fill="none" stroke="#aaa" stroke-width="1.200" d="M.7 13C1 6 6 1 12.700.7M3.700 13.500C4 8 8 4.300 12.700 4M6.700 13.500C7 10 9.500 7.700 12.700 7.500"/><path fill="#fff" d="M10 11h3v3h-3z"/></svg>
      <svg class="vol" viewBox="0 0 17 14"><path fill="none" stroke="#fff" stroke-width="1.200" d="M.7 4.500h2.500L6 1.500v11L3.200 9.500H.7zM8.500 4.500q1.800 2.500 0 5M11 2.700q3.500 4.300 0 8.600M13.500 1q5 6 0 12"/></svg>
      <span class="eng">{@render t('ENG', 23)}</span>
      <div class="clock"><div>{@render t('12:52', 27)}<span class="ar">ص</span></div><div class="ar">٢٠٢٢/٠٥/٢٠</div></div>
      <svg class="note" viewBox="0 0 17 17"><path fill="none" stroke="#fff" stroke-width="1.400" d="M.8.8h15.400v12h-5L8.500 15.500 6 12.800H.8z"/></svg>
      <i class="peek"></i>
    </section>

    <div class="dialog">
      <div class="dtitle">{@render t('Convert Text to Columns Wizard - Step 1 of 3', 235)}<b>?</b><svg viewBox="0 0 11 11"><path stroke="#000" stroke-width="1.100" d="M.5.5l10 10M10.500.5l-10 10"/></svg></div>
      <div class="dbody">
        <p>{@render t('The Text Wizard has determined that your data is Delimited.', 306.300)}</p>
        <p>{@render t('If this is correct, choose Next, or choose the data type that best describes your data.', 429)}</p>
        <div class="frame">
          <div class="legend">{@render t('Original data type', 91.700)}</div>
          <div class="choose">{@render t('Choose the file type that best describes your data:', 257.500)}</div>
          <div class="opt"><i class="radio on"></i><span class="focus"><span class="t" use:fit={49}><u>D</u>elimited</span></span>{@render t('- Characters such as commas or tabs separate each field.', 286.800)}</div>
          <div class="opt"><i class="radio"></i><span class="plain"><span class="t" use:fit={60}>Fixed <u>w</u>idth</span></span>{@render t('- Fields are aligned in columns with spaces between each field.', 322.800)}</div>
        </div>
        <div class="plabel">{@render t('Preview of selected data:', 126)}</div>
        <div class="preview">
          <div class="lines">
            {#each rows.slice(0, 5) as r, i}<div class="pl"><b>{i + 1}</b><span>{r},+</span></div>{/each}
            <div class="pl"><b></b></div>
          </div>
          <div class="pscroll"><svg viewBox="0 0 8 6"><path fill="none" stroke="#555" stroke-width="2" d="M.8 5L4 1.500 7.200 5"/></svg><div></div><svg class="dn" viewBox="0 0 8 6"><path fill="none" stroke="#555" stroke-width="2" d="M.8 1L4 4.500 7.200 1"/></svg></div>
        </div>
        <div class="pfoot"><svg viewBox="0 0 6 8"><path fill="none" stroke="#bbb" stroke-width="1.800" d="M5 .7L1.300 4 5 7.300"/></svg><svg viewBox="0 0 6 8"><path fill="none" stroke="#bbb" stroke-width="1.800" d="M1 .7L4.700 4 1 7.300"/></svg></div>
        <div class="btns">
          <div class="bt">{@render t('Cancel', 33.300)}</div>
          <div class="bt dis">{@render t('< Back', 33)}</div>
          <div class="bt def"><span class="t" use:fit={32}><u>N</u>ext &gt;</span></div>
          <div class="bt"><span class="t" use:fit={30.400}><u>F</u>inish</span></div>
        </div>
      </div>
    </div>

    <div class="mark frame-a"></div>
    <div class="mark ring-a"></div>
    <div class="mark ring-b"></div>
  </div>
</div>

<style>
  :global(body) { background: #fff; }
  .page { height: 1112px; padding: 1px 0 0 1px; box-sizing: border-box; overflow: hidden; }
  .screen { position: relative; width: 1366px; height: 768px; overflow: hidden; transform: scale(1.9707, 1.414); transform-origin: 0 0; background: #e6e6e6; font: 11.4px/16px 'Open Sans', 'Noto Sans', sans-serif; color: #3b3b3b; display: flex; flex-direction: column; }
  .screen * { box-sizing: border-box; }
  svg { display: block; flex: none; overflow: visible; }
  i { font-style: normal; }
  .t { display: inline-block; white-space: pre; flex: none; }
  .caret { display: inline-block; border: 2.700px solid transparent; border-top: 3px solid #666; border-bottom: 0; margin-left: 4px; flex: none; }
  .caret.lg { border-width: 4px 3.700px 0; }
  .caret.up { border: 3.700px solid transparent; border-bottom: 4px solid #666; border-top: 0; margin: 0; }

  .titlebar { height: 57px; background: #217346; position: relative; display: grid; grid-template: 33px 24px / 1fr 80px 1fr; color: #fff; flex: none; }
  .art { position: absolute; left: 866px; top: 0; width: 500px; height: 57px; }
  .quick svg { width: 150px; height: 16px; margin: 7px 0 0 19.700px; }
  .docname { text-align: center; line-height: 34px; color: #b5d3c1; padding-right: 3px; }
  .winctl { position: relative; }
  .winctl svg { width: 152px; height: 12px; margin: 9.500px 0 0 auto; position: relative; right: 16px; }
  nav { grid-column: 1 / 4; display: flex; position: relative; height: 24px; line-height: 23px; }
  .tab { display: flex; }
  .file { padding-left: 20px; width: 76.500px; padding-top: .5px; }
  .home { width: 61.600px; }
  .insert { width: 57.500px; }
  .layout { width: 94.300px; }
  .formulas { width: 65.300px; }
  .data { width: 50.800px; background: #f1f1f1; color: #217346; justify-content: center; }
  .review { margin-left: 15.500px; width: 65.500px; }
  .view { width: 54px; }
  .team { width: 57.600px; }
  .tell { color: #9fcdb0; gap: 6px; }
  .tell svg { width: 10.700px; height: 14px; margin-top: 4px; }
  .share { margin-left: auto; width: 74.200px; height: 23px; background: #0f5c31; display: flex; gap: 3.500px; padding-left: 7px; font-weight: 500; }
  .share svg { width: 15.500px; height: 16px; margin-top: 3.500px; }

  .ribbon { height: 93px; background: #f1f1f1; border-bottom: 1px solid #d2d2d2; display: flex; flex: none; position: relative; }
  .group { position: relative; height: 93px; display: grid; grid-template-rows: 74.500px 18px; padding-top: 3px; }
  .group::after { content: ''; position: absolute; right: 0; top: 4px; height: 84px; width: 1px; background: #d0d0d0; }
  .body { display: flex; }
  .g1 { width: 70px; } .g2 { width: 163px; } .g3 { width: 149px; } .g4 { width: 206px; }
  .g5 { width: 328px; } .g6 { width: 114px; } .g7 { width: 120px; } .g8 { width: 108px; }
  .big { display: flex; flex-direction: column; align-items: center; padding-top: 1px; }
  .big > svg, .big > .sorticon, .big > .wf { margin-bottom: auto; }
  .big > .t:nth-child(2) { position: absolute; top: 40.500px; }
  .big > :nth-child(3) { position: absolute; top: 56px; }
  .big span:not(.t) { display: flex; align-items: center; }
  .big .caret { margin-right: -9px; }
  .big .wm .caret { margin-left: 3.500px; }
  .g1 .big { padding-right: 1.500px; }
  .g1 .big > .t:nth-child(2) { top: 38.500px; }
  .g1 .big > :nth-child(3) { top: 54.500px; left: 19px; }
  .b1 { width: 31px; height: 31px; }
  .g2 .big { width: 52px; padding-right: .5px; } .b2 { width: 32px; height: 32px; margin-top: 2px; }
  .g3 .big { width: 51px; } .b3 { width: 31px; height: 32px; margin-top: 4px; margin-left: 4px; }
  .g2 .big > :nth-child(3) { left: 5.500px; }
  .g3 .big > :nth-child(3) { left: 15px; }
  .list { display: flex; flex-direction: column; }
  .cmd { height: 23.200px; display: flex; align-items: center; gap: 3px; }
  .cmd .caret { margin-left: 7.500px; }
  .sm { width: 16px; height: 16px; }
  .off { color: #a0a0a0; }
  .off .caret { border-top-color: #b5b5b5; }
  .glabel { text-align: center; color: #666; line-height: 18px; margin-top: -2.500px; }
  .az { width: 28px; padding: 10.500px 0 0 8.500px; display: flex; flex-direction: column; gap: 15px; }
  .pair { display: flex; gap: 2px; }
  .pair b { font-size: 9px; line-height: 8.300px; width: 6.500px; height: 16.500px; font-weight: 700; }
  .pair b i, .zaaz i { display: block; }
  .pair svg { width: 6px; height: 16px; }
  .blue { color: #3f7cba; } .purple { color: #8b4fa8; }
  .sortbtn { width: 37px; }
  .sorticon { position: relative; margin-top: 5px; }
  .b4 { width: 29px; height: 25.500px; }
  .zaaz { position: absolute; inset: 4px 0 0; display: grid; grid-template: 10px 10px / 14.500px 14.500px; grid-auto-flow: column; text-align: center; font-size: 10.500px; line-height: 10.500px; }
  .rule { width: 1px; height: 55px; margin: 7px 5px 0 7px; background: #dcdcdc; }
  .filterbtn { width: 40px; padding-right: 0; }
  .b5 { width: 27.500px; height: 27.500px; margin-top: 4.500px; }
  .g4 .list { margin-left: 3.500px; }
  .g5 .big { width: 60px; }
  .b6 { width: 30px; height: 26px; margin-top: 4px; }
  .g5 .l1 { width: 130px; } .g5 .menu .caret { margin-left: 8.500px; }
  .g6 .big.wi { width: 64px; } .g6 .big.fc { width: 41px; }
  .g6 .wi > :nth-child(3) { left: 6.500px; }
  .wf { position: relative; margin-top: 5px; margin-left: 2px; }
  .b7 { width: 28.500px; height: 29.500px; }
  .wf b { position: absolute; left: 14.500px; top: 5px; font-size: 27px; line-height: 28px; color: #3f7cba; }
  .b8 { width: 28px; height: 26px; margin-top: 5px; }
  .g7 .l1 { width: 90px; margin-left: 7.300px; }
  .g8 .list { margin-left: 7.300px; }
  .out { display: flex; padding-left: 32.300px; gap: 37px; align-items: center; height: 18px; }
  .out svg { width: 7px; height: 7px; margin-top: 1px; }
  .collapse { width: 8.500px; height: 5.500px; margin: 81px 10px 0 auto; }

  .fbar { height: 46px; padding-top: 10px; display: flex; flex: none; }
  .box { height: 26px; background: #fff; border: 1px solid #c8c8c8; display: flex; align-items: center; font-size: 13.200px; }
  .name { width: 101.500px; margin-left: 5px; padding: 0 7px 0 6px; justify-content: space-between; }
  .dots { display: flex; flex-direction: column; gap: 2.700px; width: 2px; }
  .dots i { width: 2px; height: 2px; background: #aaa; }
  .fbar .dots { margin: 7px 14.500px 0 13.500px; }
  .tools { width: 110px; padding-left: 12.500px; }
  .tools svg:first-child { width: 11px; height: 11px; }
  .tools svg:nth-child(2) { width: 13px; height: 11px; margin: 0 23.500px 0 24.500px; }
  .tools em { font: italic 700 13.500px/16px 'Liberation Serif', serif; color: #666; }
  .tools sub { font-size: 9.500px; line-height: 0; vertical-align: -1px; }
  .formula { flex: 1; margin: 0 7px 0 3.500px; padding: 0 7px 0 11px; justify-content: space-between; unicode-bidi: isolate; }
  .formula .t { unicode-bidi: bidi-override; direction: ltr; }
  .formula svg { width: 8px; height: 5px; }

  .work { display: flex; height: 483px; flex: none; }
  .sheet { width: 1344.500px; position: relative; overflow: hidden; background: #fff; border-right: 1px solid #9b9b9b; border-bottom: 1px solid #9b9b9b; }
  .row { display: flex; height: 19px; }
  .num { width: 28px; background: #d2d2d2; border-bottom: 1px solid #b4b4b4; font: 14.600px/20px 'Liberation Sans', sans-serif; color: #217346; text-align: center; flex: none; }
  .a { width: 443px; background: #c6c6c6; border-bottom: 1px solid #9e9e9e; text-align: right; padding-right: 2.800px; font: 13.330px/20px 'Liberation Mono', 'DejaVu Sans Mono', monospace; color: #000; flex: none; }
  .a span { unicode-bidi: bidi-override; direction: ltr; white-space: pre; }
  .a u { display: inline-block; width: 8px; text-align: center; text-decoration: none; line-height: 12px; font-weight: 700; }
  .first .a { background: #fff; }
  .c { width: 72px; border-right: 1px solid #d4d4d4; border-bottom: 1px solid #d4d4d4; flex: none; }
  .tail { border-right: 0; }
  .head .num { background: #e6e6e6; border-right: 1px solid #b4b4b4; padding: 4px 0 0 15px; }
  .head .num svg { width: 10px; height: 11px; }
  .head .a { background: #d2d2d2; color: #217346; text-align: center; font: 14.600px/20px 'Liberation Sans', sans-serif; border-bottom: 0; border-right: 1px solid #aaa; padding: 0; }
  .head .c { background: #e6e6e6; text-align: center; font: 14.600px/20px 'Liberation Sans', sans-serif; color: #444; border-color: #b4b4b4; border-bottom-color: #9b9b9b; }
  .selection { position: absolute; left: 27px; top: 17px; width: 445px; height: 480px; border: 2px solid #217346; }
  .vscroll { margin: 2px 0 0 3.700px; width: 14.600px; background: #dcdcdc; display: flex; flex-direction: column; }
  .btn, .thumb { background: #fff; border: 1px solid #ababab; flex: none; }
  .vscroll .btn { height: 15.500px; display: grid; place-items: center; }
  .vscroll .btn .caret { margin: 0; }
  .vscroll .thumb { height: 15px; }
  .end { margin-left: 0; }
  .vscroll .end { margin-top: auto; }

  .tabs { height: 28px; display: flex; border-bottom: 1px solid #bdbdbd; flex: none; }
  .navs { width: 32px; height: 8px; margin: 8px 0 0 27px; }
  .sheettab { margin-left: 41px; width: 65px; height: 24px; background: #fff; border: solid #ababab; border-width: 0 1px; box-shadow: inset 0 -2px #217346; color: #217346; font-weight: 700; text-align: center; line-height: 23px; }
  .add { width: 16.500px; height: 16.500px; margin: 4.500px 0 0 33px; }
  .tabs .dots { margin: 7px 0 0 604.500px; }
  .hscroll { margin: 6px 0 0 14.500px; width: 509px; height: 15px; background: #dcdcdc; display: flex; }
  .hscroll .btn { width: 14.500px; display: grid; place-items: center; }
  .hscroll .btn svg { width: 4px; height: 7px; }
  .hscroll .thumb { width: 442px; }
  .hscroll .end { margin-left: auto; }
  .status { height: 21px; background: #f1f1f1; display: flex; align-items: center; color: #444; flex: none; line-height: 20px; }
  .ready { padding-left: 7.600px; width: 996px; }
  .count { width: 75px; }
  .v { width: 38.300px; height: 21px; display: grid; place-items: center; }
  .v.on { background: #c8c8c8; }
  .v svg { width: 14px; height: 13px; }
  .slider { width: 122px; height: 12px; margin: 0 13px 0 3px; }

  .taskbar { height: 40px; background: #1d1d1d; display: flex; align-items: center; flex: none; color: #fff; position: relative; font-size: 13px; }
  .sys { width: 48px; display: grid; place-items: center; }
  .sys svg { width: 16px; height: 16px; }
  .apps { display: flex; margin-left: 3.500px; width: 800.500px; }
  .app { width: 42.130px; height: 40px; flex: none; display: grid; place-items: center; }
  .glyph { position: relative; width: 24px; height: 24px; }
  .glyph svg { width: 24px; height: 24px; }
  .glyph b { position: absolute; left: 3.500px; top: 4px; font-size: 11.500px; line-height: 16px; }
  .chrome .glyph b { left: 14.500px; top: 10px; font-size: 10px; font-weight: 400; }
  .ppt .glyph { left: -1px; }
  .firefox .glyph { left: .5px; }
  .word .glyph b { left: 1.500px; font-size: 10.500px; }
  .open { background: linear-gradient(#e68cf0, #e68cf0) center bottom / 33px 2px no-repeat; }
  .two { background: linear-gradient(90deg, #e68cf0 25px, #ba70c0 25px) center bottom / 34px 2px no-repeat; }
  .active { background: linear-gradient(#e68cf0, #e68cf0) left bottom / 100% 2px no-repeat, linear-gradient(90deg, #4b4b4b 38px, #2c2c2c 38px 39px, #404040 39px); }
  .setup { background: linear-gradient(#ff7a00, #ff7a00) left bottom / 100% 2px no-repeat, #a55f28; }
  .moon { width: 18px; height: 18px; margin-left: 28px; }
  .temp { margin-left: 11px; width: 47.500px; }
  .chev { width: 12px; height: 8px; margin-right: 13px; }
  .meet { width: 12px; height: 18px; margin-right: 8.500px; }
  .batt { width: 17px; height: 14px; margin-right: 10.500px; }
  .wifi { width: 13px; height: 14px; margin-right: 8px; }
  .vol { width: 17px; height: 14px; margin-right: 8.500px; }
  .eng { font-size: 12px; width: 34px; }
  .clock { width: 52px; text-align: center; font-size: 12px; line-height: 17.500px; margin-right: 18px; white-space: nowrap; }
  .ar { font-family: 'DejaVu Sans', sans-serif; unicode-bidi: bidi-override; direction: ltr; font-size: 10.500px; }
  span.ar { margin-left: 3px; }
  .clock div.ar { letter-spacing: -.6px; font-size: 10px; }
  .note { width: 16.500px; height: 16.500px; margin-top: 1px; }
  .peek { width: 1px; height: 40px; background: #777; margin-left: auto; margin-right: 5px; }

  .dialog { position: absolute; left: 479.200px; top: 140px; width: 506px; height: 413px; background: #f0f0f0; border: 1px solid #6a6a6a; box-shadow: 0 5px 14px rgba(0, 0, 0, .38); color: #000; }
  .dtitle { background: #fff; height: 31px; line-height: 30px; display: flex; padding-left: 8.200px; }
  .dtitle b { margin-left: 190.500px; font-size: 12px; }
  .dtitle svg { width: 10.500px; height: 10px; margin: 9.500px 0 0 37.500px; }
  .dbody { padding: 3px 6.300px 0 6.200px; }
  .dbody p { margin: 2px 0 5.200px; }
  .frame { border: 1px solid #dcdcdc; height: 69.500px; margin-top: 13px; position: relative; padding: 0 7.500px; }
  .legend { position: absolute; top: -8.500px; left: 3.500px; background: #f0f0f0; padding: 0 2px; }
  .choose { padding-top: 11px; }
  .opt { display: flex; align-items: center; height: 19.500px; padding-left: 18.500px; margin-top: -1.500px; }
  .opt + .opt { margin-top: 0; }
  .radio { width: 13px; height: 13px; border: 1px solid #333; border-radius: 50%; background: #fff; margin-right: 2.500px; }
  .radio.on { background: radial-gradient(circle, #222 3.200px, #fff 3.900px); }
  .focus { outline: 1px dotted #000; width: 51.500px; height: 15.500px; line-height: 15px; padding-left: 1px; margin-right: 22.500px; }
  .plain { padding-left: 1px; width: 74px; }
  .plabel { padding: 88.800px 0 0 8.700px; }
  .preview { display: flex; margin: 9.500px 0 0 8.700px; height: 77px; }
  .lines { width: 457.500px; border: solid #000; border-width: 2px 1px 0; box-shadow: 0 1px #fff; overflow: hidden; }
  .pl { display: flex; height: 14px; font: 11.670px/18px 'Liberation Mono', monospace; white-space: pre; }
  .pl b { width: 13.500px; height: 14px; border-right: 1px solid #000; border-bottom: 1px solid #000; text-align: center; font-weight: 400; flex: none; background: #f4f4f4; }
  .pscroll { width: 15.500px; margin-left: 1px; display: flex; flex-direction: column; align-items: center; padding: 7px 0 6px; }
  .pscroll svg { width: 8px; height: 6px; }
  .pscroll div { width: 15.500px; height: 17px; background: #cdcdcd; margin: 4px 0 auto; }
  .pfoot { display: flex; justify-content: space-between; padding: 4.500px 30px 0 13.500px; }
  .pfoot svg { width: 6px; height: 8px; }
  .btns { display: flex; gap: 10.200px; justify-content: flex-end; margin-top: 21.500px; }
  .bt { width: 73.900px; height: 22px; background: #e1e1e1; border: 1px solid #adadad; text-align: center; line-height: 19px; }
  .dis { background: #ccc; border-color: #bfbfbf; color: #9a9a9a; text-shadow: 1px 1px #f4f4f4; }
  .def { border: 2px solid #0078d7; line-height: 17px; padding-right: 1.500px; }

  .mark { position: absolute; border: solid #ed1c24; }
  .frame-a { left: 30.500px; top: 197px; width: 449.500px; height: 523.500px; border-width: 3.300px 2.500px; }
  .ring-a { left: 511.500px; top: 246px; width: 80.500px; height: 34.500px; border-width: 4px 3.200px; border-radius: 50%; }
  .ring-b { left: 822px; top: 505px; width: 77px; height: 61.500px; border-width: 3.200px 2.500px; border-radius: 50%; }
</style>
